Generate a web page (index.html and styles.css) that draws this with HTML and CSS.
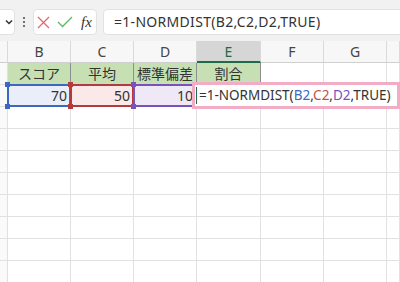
FILE: index.html
```html
<!DOCTYPE html>
<html lang="ja">
<head>
  <meta charset="UTF-8" />
  <title>NORMDIST</title>
  <link rel="stylesheet" href="styles.css">
</head>
<body>
  <div class="toolbar">
    <div class="namebox">
      <svg width="8" height="6" viewBox="0 0 8 6"><path d="M1 1.5 L4 4.5 L7 1.5" fill="none" stroke="#333" stroke-width="1.5"/></svg>
    </div>
    <div class="dots">
      <svg width="4" height="12" viewBox="0 0 4 12"><circle cx="2" cy="2" r="1.1" fill="#555"/><circle cx="2" cy="6" r="1.1" fill="#555"/><circle cx="2" cy="10" r="1.1" fill="#555"/></svg>
    </div>
    <div class="fxbtns">
      <svg class="ico-x" width="13" height="13" viewBox="0 0 13 13"><path d="M1 1 L12 12 M12 1 L1 12" stroke="#e06a6a" stroke-width="1.3" fill="none"/></svg>
      <svg class="ico-ok" width="16" height="12" viewBox="0 0 16 12"><path d="M1 6 L5.5 10.5 L15 1" stroke="#5cb85c" stroke-width="1.3" fill="none"/></svg>
      <span class="fx">fx</span>
    </div>
    <div class="formula">=1-NORMDIST(B2,C2,D2,TRUE)</div>
  </div>

  <div class="sheet">
    <!-- column headers -->
    <div class="c hd"></div>
    <div class="c hd">B</div>
    <div class="c hd">C</div>
    <div class="c hd">D</div>
    <div class="c hd sel">E</div>
    <div class="c hd">F</div>
    <div class="c hd">G</div>
    <div class="c hd"></div>

    <!-- row 1 -->
    <div class="c rh"></div>
    <div class="c lbl">スコア</div>
    <div class="c lbl">平均</div>
    <div class="c lbl">標準偏差</div>
    <div class="c lbl">割合</div>
    <div class="c"></div>
    <div class="c"></div>
    <div class="c"></div>

    <!-- row 2 -->
    <div class="c rh"></div>
    <div class="c num rng blue">70<i class="h tl"></i><i class="h tr"></i><i class="h bl"></i><i class="h br"></i></div>
    <div class="c num rng red">50<i class="h tl"></i><i class="h tr"></i><i class="h bl"></i><i class="h br"></i></div>
    <div class="c num rng purple">10<i class="h tl"></i><i class="h tr"></i><i class="h bl"></i><i class="h br"></i></div>
    <div class="c edit">
      <div class="editor"><span class="caret"></span>=1-NORMDIST(<span class="rb">B2</span>,<span class="rr">C2</span>,<span class="rp">D2</span>,TRUE)</div>
    </div>
    <div class="c"></div>
    <div class="c"></div>
    <div class="c"></div>

    <div class="c rh"></div><div class="c"></div><div class="c"></div><div class="c"></div><div class="c"></div><div class="c"></div><div class="c"></div><div class="c"></div>
    <div class="c rh"></div><div class="c"></div><div class="c"></div><div class="c"></div><div class="c"></div><div class="c"></div><div class="c"></div><div class="c"></div>
    <div class="c rh"></div><div class="c"></div><div class="c"></div><div class="c"></div><div class="c"></div><div class="c"></div><div class="c"></div><div class="c"></div>
    <div class="c rh"></div><div class="c"></div><div class="c"></div><div class="c"></div><div class="c"></div><div class="c"></div><div class="c"></div><div class="c"></div>
    <div class="c rh"></div><div class="c"></div><div class="c"></div><div class="c"></div><div class="c"></div><div class="c"></div><div class="c"></div><div class="c"></div>
    <div class="c rh"></div><div class="c"></div><div class="c"></div><div class="c"></div><div class="c"></div><div class="c"></div><div class="c"></div><div class="c"></div>
    <div class="c rh"></div><div class="c"></div><div class="c"></div><div class="c"></div><div class="c"></div><div class="c"></div><div class="c"></div><div class="c"></div>
    <div class="c rh"></div><div class="c"></div><div class="c"></div><div class="c"></div><div class="c"></div><div class="c"></div><div class="c"></div><div class="c"></div>
  </div>
</body>
</html>
```

FILE: styles.css
```css
body {
  margin: 0;
  font-family: "Noto Sans", "Noto Sans CJK JP", sans-serif;
  color: #333;
  background: #fff;
  overflow: hidden;
  width: 400px;
  height: 282px;
}

/* formula bar */
.toolbar {
  height: 41px;
  box-sizing: border-box;
  padding-top: 9px;
  background: #f1f1f1;
  display: flex;
  align-items: flex-start;
}

.namebox,
.fxbtns,
.formula {
  height: 26px;
  box-sizing: border-box;
  background: #fff;
  border: 1px solid #e2e2e2;
  border-radius: 4px;
}

.namebox {
  width: 21px;
  margin-left: -6px;
  display: flex;
  align-items: center;
  padding-left: 10px;
}

.dots {
  width: 18px;
  height: 26px;
  display: flex;
  align-items: center;
  justify-content: center;
}

.fxbtns {
  width: 64px;
  display: flex;
  align-items: center;
  padding-left: 3px;
}

.ico-x {
  margin-right: 7px;
}

.ico-ok {
  margin-right: 8px;
}

.fx {
  font-family: "Liberation Serif", serif;
  font-style: italic;
  font-size: 15px;
  color: #333;
}

.formula {
  flex: 1;
  margin-left: 6px;
  margin-right: -10px;
  padding-left: 10px;
  font-size: 14px;
  line-height: 24px;
  letter-spacing: 0.3px;
}

/* grid */
.sheet {
  display: grid;
  grid-template-columns: 8px 63px 63px 63px 64px 63px 63px 1fr;
  grid-auto-rows: 22px;
}

.c {
  box-sizing: border-box;
  border-right: 1px solid #e1e1e1;
  border-bottom: 1px solid #e1e1e1;
  font-size: 14px;
  line-height: 21px;
  position: relative;
}

.hd {
  background: #f7f7f7;
  border-right-color: #dadada;
  border-bottom-color: #cfcfcf;
  text-align: center;
  color: #444;
}

.hd.sel {
  background: #d6d6d6;
  color: #1f6b45;
  border-bottom: 2px solid #1f6b45;
}

.rh {
  background: #fafafa;
}

.lbl {
  background: #c6e0b4;
  border-right-color: #8f8f8f;
  text-align: center;
  color: #333;
}

.num {
  text-align: right;
  padding-right: 3px;
  white-space: nowrap;
}

/* referenced ranges */
.rng::before {
  content: "";
  position: absolute;
  top: -1px;
  left: -1px;
  right: -1px;
  bottom: -1px;
  border: 2px solid;
  border-color: inherit;
}

.blue { background: #e9eef9; border-color: #3d68c0; }
.red { background: #fbe8e8; border-color: #b23b3e; }
.purple { background: #efe9f7; border-color: #7b52b9; }

.h {
  position: absolute;
  width: 5px;
  height: 5px;
  z-index: 1;
}

.blue .h { background: #3d68c0; }
.red .h { background: #b23b3e; }
.purple .h { background: #7b52b9; }

.tl { top: -3px; left: -3px; }
.tr { top: -3px; right: -3px; }
.bl { bottom: -3px; left: -3px; }
.br { bottom: -3px; right: -3px; }

/* in-cell editor */
.editor {
  position: absolute;
  top: -3px;
  left: -5px;
  width: 208px;
  height: 27px;
  box-sizing: border-box;
  border: 3px solid #f3acc6;
  background: #fff;
  padding-left: 4px;
  font-size: 13.5px;
  line-height: 21px;
  white-space: nowrap;
  z-index: 2;
}

.caret {
  position: absolute;
  left: 1px;
  top: 2px;
  width: 1px;
  height: 17px;
  background: #1f6b45;
}

.rb { color: #3d68c0; }
.rr { color: #c0504d; }
.rp { color: #7b52b9; }
```
